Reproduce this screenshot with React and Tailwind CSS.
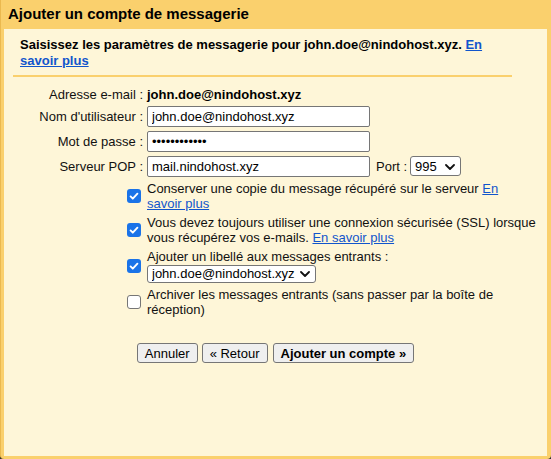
import { useState } from 'react';

function Check({ checked }) {
  return checked ? (
    <span className="flex w-[14px] h-[14px] shrink-0 items-center justify-center rounded-[3px] bg-[#1a73e8]">
      <svg viewBox="0 0 14 14" className="w-[12px] h-[12px]" fill="none" stroke="white" strokeWidth="2.2" strokeLinecap="round" strokeLinejoin="round">
        <path d="M3 7.5l2.6 2.6L11 4.3" />
      </svg>
    </span>
  ) : (
    <span className="block w-[14px] h-[14px] shrink-0 rounded-[3px] border border-[#767676] bg-white" />
  );
}

function Chevron() {
  return (
    <svg viewBox="0 0 10 6" className="pointer-events-none absolute right-[6px] top-1/2 -translate-y-1/2 w-[10px] h-[6px]" fill="none" stroke="#111" strokeWidth="1.8" strokeLinecap="round" strokeLinejoin="round">
      <path d="M1 1l4 4 4-4" />
    </svg>
  );
}

const LINK = 'text-[#1155cc] underline';

export default function App() {
  const [user, setUser] = useState('john.doe@nindohost.xyz');
  const [pass, setPass] = useState('motdepasse12');
  const [server, setServer] = useState('mail.nindohost.xyz');

  const inputCls = 'h-[21px] w-[223px] rounded-[2px] border border-[#767676] bg-white px-[4px] text-[13px] text-black outline-none';

  return (
    <div className="h-[459px] w-full bg-[#2e2e2e] font-['Liberation_Sans',Arial,sans-serif] text-[#111]">
      <div className="flex h-full flex-col rounded-b-[4px] border-l border-[#ebb94f] bg-[#fad06d]">
        {/* Title bar */}
        <div className="flex h-[29px] shrink-0 items-center pl-[7px] text-[15px] font-bold text-black">
          Ajouter un compte de messagerie
        </div>

        <div className="ml-[3px] mr-[4px] mb-[3px] flex-1 bg-[#fef6d8]">
          <div className="ml-[9px] w-[499px]">
            <div className="border-b-2 border-[#fad06d] px-[7px] pt-[8px] pb-[6px] text-[13px] font-bold leading-[16px] text-black">
              <p>
                Saisissez les paramètres de messagerie pour john.doe@nindohost.xyz. <a href="#" className={LINK}>En<br />savoir plus</a>
              </p>
            </div>

            {/* Fields */}
            <div className="grid grid-cols-[130px_1fr] items-center gap-x-[4px] pt-[9px] text-[13px]">
              <div className="flex h-[18px] items-center justify-end">Adresse e-mail :</div>
              <div className="flex h-[18px] items-center font-bold text-black">john.doe@nindohost.xyz</div>

              <div className="mt-[2px] text-right">Nom d'utilisateur :</div>
              <div className="mt-[2px] flex">
                <input className={inputCls} value={user} onChange={e => setUser(e.target.value)} />
              </div>

              <div className="mt-[4px] text-right">Mot de passe :</div>
              <div className="mt-[4px] flex">
                <input type="password" className={inputCls} value={pass} onChange={e => setPass(e.target.value)} />
              </div>

              <div className="mt-[4px] text-right">Serveur POP :</div>
              <div className="mt-[4px] flex items-center">
                <input className={inputCls} value={server} onChange={e => setServer(e.target.value)} />
                <span className="ml-[6px] mr-[3px]">Port :</span>
                <div className="relative">
                  <select defaultValue="995" className="h-[20px] w-[51px] appearance-none rounded-[3px] border border-[#767676] bg-white pl-[4px] text-[13px] text-black outline-none">
                    <option>110</option>
                    <option>995</option>
                  </select>
                  <Chevron />
                </div>
              </div>
            </div>

            {/* Options */}
            <div className="ml-[114px] mt-[4px] flex flex-col gap-[4px] text-[13px] leading-[15px]">
              <div className="flex items-center gap-[6px]">
                <Check checked />
                <p className="w-[396px]">
                  Conserver une copie du message récupéré sur le serveur <a href="#" className={LINK}>En<br />savoir plus</a>
                </p>
              </div>
              <div className="flex items-center gap-[6px]">
                <Check checked />
                <p className="w-[396px]">
                  <span className="whitespace-nowrap">Vous devez toujours utiliser une connexion sécurisée (SSL) lorsque</span><br />
                  vous récupérez vos e-mails. <a href="#" className={LINK}>En savoir plus</a>
                </p>
              </div>
              <div className="flex items-center gap-[6px]">
                <Check checked />
                <div className="w-[396px]">
                  <p>Ajouter un libellé aux messages entrants :</p>
                  <div className="relative mt-[1px] inline-block">
                    <select className="h-[18px] appearance-none rounded-[3px] border border-[#767676] bg-white pl-[4px] pr-[20px] text-[13px] leading-[16px] text-black outline-none">
                      <option>john.doe@nindohost.xyz</option>
                    </select>
                    <Chevron />
                  </div>
                </div>
              </div>
              <div className="flex items-center gap-[6px]">
                <Check />
                <p className="w-[396px]">
                  Archiver les messages entrants (sans passer par la boîte de réception)
                </p>
              </div>
            </div>
          </div>

          {/* Buttons */}
          <div className="mt-[26px] flex justify-center gap-[4px] text-[13px] text-black">
            <button className="h-[20px] rounded-[3px] border border-[#767676] bg-[#efefef] px-[7px]">Annuler</button>
            <button className="h-[20px] rounded-[3px] border border-[#767676] bg-[#efefef] px-[7px]">« Retour</button>
            <button className="ml-[1px] h-[20px] rounded-[3px] border border-[#767676] bg-[#efefef] px-[7px] font-bold">Ajouter un compte »</button>
          </div>
        </div>
      </div>
    </div>
  );
}
